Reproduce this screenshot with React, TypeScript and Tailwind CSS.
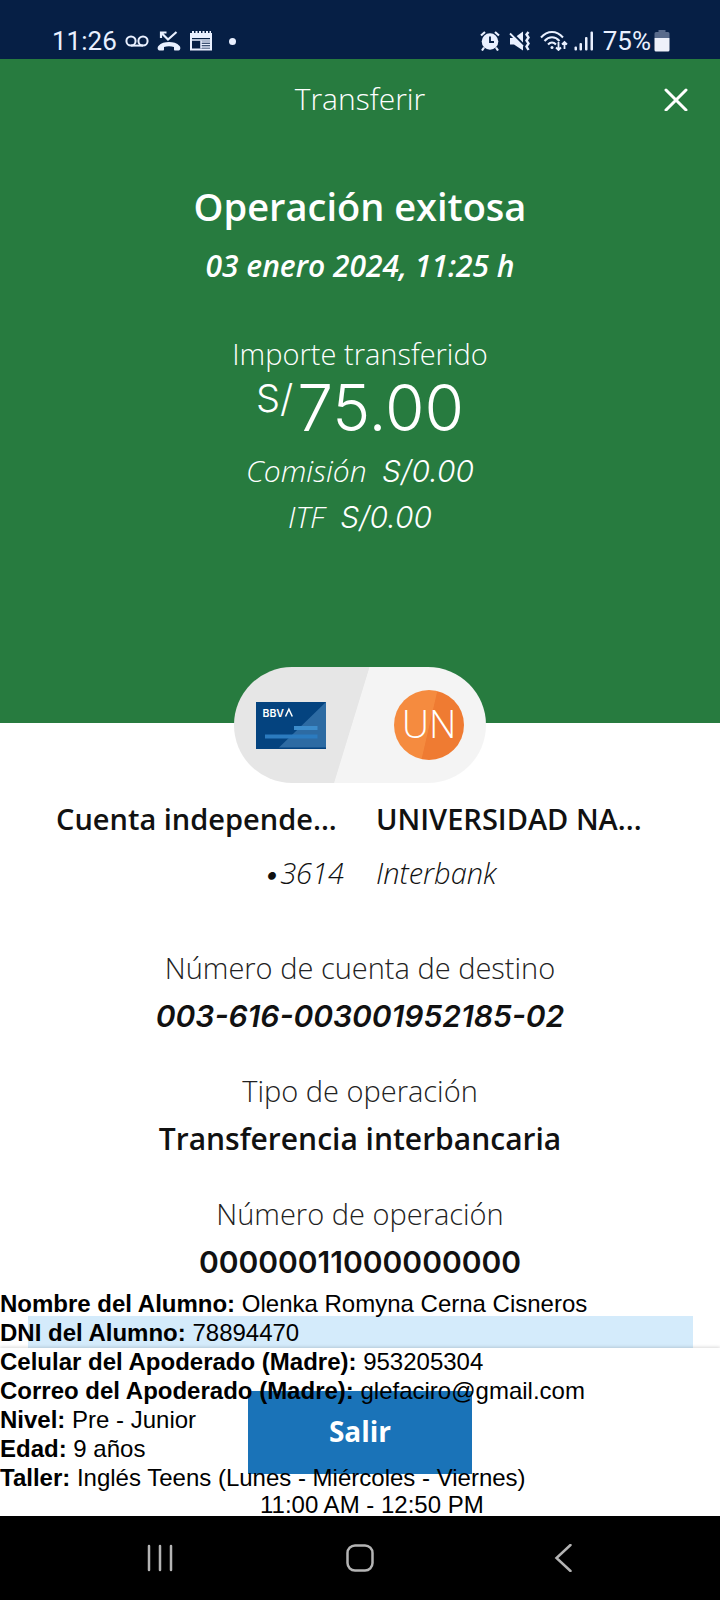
import type { ReactNode } from "react";

interface DetailProps {
  label: string;
  children: ReactNode;
  valueClass?: string;
}

const studentInfo = [
  { label: "Nombre del Alumno:", value: "Olenka Romyna Cerna Cisneros" },
  { label: "DNI del Alumno:", value: "78894470" },
  { label: "Celular del Apoderado (Madre):", value: "953205304" },
  { label: "Correo del Apoderado (Madre):", value: "glefaciro@gmail.com" },
  { label: "Nivel:", value: "Pre - Junior" },
  { label: "Edad:", value: "9 años" },
  { label: "Taller:", value: "Inglés Teens (Lunes - Miércoles - Viernes)" },
];

function VoicemailIcon() {
  return (
    <svg width="24" height="20" viewBox="0 0 24 20" fill="none" stroke="currentColor" strokeWidth="2">
      <circle cx="6" cy="10" r="4.6" />
      <circle cx="18" cy="10" r="4.6" />
      <path d="M6 14.6h12" />
    </svg>
  );
}

function MissedCallIcon() {
  return (
    <svg width="24" height="20" viewBox="0 0 24 20" fill="none">
      <path d="M4 7V1.5h5.5M4.5 2l6.500 6.500L19.500 1" stroke="currentColor" strokeWidth="2.200" />
      <path
        d="M1 18.5c-.6-1-.4-2.6.4-3.6C4 12 8 11 12 11s8 1 10.600 3.900c.8 1 1 2.600.4 3.600-.3.700-.8 1-1.500 1h-3.500c-.6 0-1-.4-1-1v-2.500c-3-1.100-7-1.100-10 0v2.500c0 .6-.4 1-1 1H2.500c-.7 0-1.200-.3-1.500-1z"
        fill="currentColor"
      />
    </svg>
  );
}

function CalendarNewsIcon() {
  return (
    <svg width="24" height="20" viewBox="0 0 24 20" fill="none" stroke="currentColor">
      <path d="M2 3h20v15.500H2z" strokeWidth="2" />
      <path d="M2 5h20" strokeWidth="4" />
      <path d="M2 9h20" strokeWidth="1.500" />
      <path d="M3 1.500h19" strokeWidth="3" strokeDasharray="2 1.500" />
      <path d="M12 9.500v8M12 11h9M12 13.500h9M12 16h9" strokeWidth="1.500" />
    </svg>
  );
}

function AlarmIcon() {
  return (
    <svg width="20" height="20" viewBox="0 0 20 20" fill="none">
      <path d="M1 4.500 5 1M19 4.500 15 1M4 16.500 2 19.500M16 16.500l2 3" stroke="currentColor" strokeWidth="2.200" />
      <circle cx="10" cy="10.500" r="8.300" fill="currentColor" />
      <path d="M10 5.500v5.500h4" stroke="#061f45" strokeWidth="1.800" />
    </svg>
  );
}

function MutedIcon() {
  return (
    <svg width="22" height="20" viewBox="0 0 22 20" fill="none">
      <path d="M1 7h4l9-6.500v19L5 13.500H1z" fill="currentColor" />
      <path d="M1 0 17 16" stroke="#061f45" strokeWidth="2.200" />
      <path d="M1 2.500 14 15.500" stroke="currentColor" strokeWidth="1.800" />
      <path d="M19.500 1 17.500 3.500l2 3-2 3 2 3-2 3 2 3.500" stroke="currentColor" strokeWidth="2.400" />
    </svg>
  );
}

function WifiIcon() {
  return (
    <svg width="28" height="20" viewBox="0 0 28 20" fill="none" stroke="currentColor">
      <path d="M1 6.500C7.500-.8 16.500-.8 23 6.500M4.500 10c4.500-5 10.500-5 15 0M8 13.500c2.500-2.800 5.500-2.800 8 0" strokeWidth="2" />
      <circle cx="12" cy="16.500" r="1.500" fill="currentColor" stroke="none" />
      <path d="M18.500 11v8M16 16.500l2.500 2.500 2.500-2.500M24.500 18v-7.500M22 13.500l2.500-2.500 2.500 2.500" strokeWidth="1.800" />
    </svg>
  );
}

function SignalIcon() {
  return (
    <svg width="20" height="20" viewBox="0 0 20 20" fill="currentColor">
      <rect x="0.500" y="15.500" width="2.500" height="4" rx="1" />
      <rect x="5.500" y="12" width="2.500" height="7.500" rx="1" />
      <rect x="11" y="6" width="2.500" height="13.500" rx="1" />
      <rect x="16.500" y="0.500" width="2.500" height="19" rx="1" />
    </svg>
  );
}

function BatteryIcon() {
  return (
    <svg width="16" height="22" viewBox="0 0 16 22">
      <path d="M4.500 0h7v2H14a1.500 1.500 0 0 1 1.500 1.500V8H.5V3.500A1.500 1.500 0 0 1 2 2h2.500z" fill="#596b8b" />
      <path d="M.5 8h15v12a1.500 1.500 0 0 1-1.500 1.500H2A1.500 1.500 0 0 1 .5 20z" fill="#eef1fa" />
    </svg>
  );
}

function StatusBar() {
  return (
    <div className="flex h-[59px] items-end justify-between bg-[#061f45] pr-[50px] pb-[2px] pl-[52px] font-['Roboto',sans-serif] text-[26px] leading-8 text-[#e9f0ff]">
      <div className="flex items-center gap-2">
        <span>11:26</span>
        <VoicemailIcon />
        <MissedCallIcon />
        <CalendarNewsIcon />
        <span className="ml-2 size-[7px] rounded-full bg-[#e9f0ff]" />
      </div>
      <div className="flex items-center gap-[9px]">
        <AlarmIcon />
        <MutedIcon />
        <div className="flex items-center gap-[6px]">
          <WifiIcon />
          <SignalIcon />
        </div>
        <div className="flex items-center gap-[3px]">
          <span>75%</span>
          <BatteryIcon />
        </div>
      </div>
    </div>
  );
}

function AccountCard() {
  return (
    <svg width="70" height="47" viewBox="0 0 70 47" role="img" aria-label="BBVA">
      <rect width="70" height="47" fill="#04437f" />
      <path d="M70 0v45.500H23z" fill="#2d6ba3" />
      <rect x="38" y="24" width="23.500" height="4" fill="#3c8ccb" />
      <rect x="9" y="32.500" width="52.500" height="4" fill="#2b7bbf" />
      <text x="6.500" y="14.500" fill="#fff" fontSize="10.500" fontWeight="600" fontFamily="Inter, sans-serif">
        BBV
      </text>
      <path d="m29.500 14.500 3.400-7.200 3.400 7.200" fill="none" stroke="#fff" strokeWidth="1.500" />
    </svg>
  );
}

function Detail({ label, children, valueClass }: DetailProps) {
  return (
    <div>
      <dt className="text-[29px] font-[350] text-[#222]">{label}</dt>
      <dd className={valueClass ?? "font-semibold"}>{children}</dd>
    </div>
  );
}

function StudentNote() {
  return (
    <div className="pointer-events-none absolute inset-x-0 top-0 font-['Liberation_Sans',Arial,sans-serif] text-[24px] leading-[29px] whitespace-nowrap text-black">
      {studentInfo.map((item) => (
        <p key={item.label}>
          <b>{item.label}</b> {item.value}
        </p>
      ))}
      <p className="pl-[260px] leading-[26px]">11:00 AM - 12:50 PM</p>
    </div>
  );
}

function NavBar() {
  return (
    <nav className="grid h-[84px] grid-cols-3 bg-black px-[60px] text-[#b4b4b4]">
      <button type="button" aria-label="Recientes" className="flex items-center justify-center">
        <svg width="28" height="28" viewBox="0 0 28 28" stroke="currentColor" strokeWidth="2.500" strokeLinecap="round">
          <path d="M3 2v24M14 2v24M25 2v24" />
        </svg>
      </button>
      <button type="button" aria-label="Inicio" className="flex items-center justify-center">
        <svg width="28" height="28" viewBox="0 0 28 28" fill="none" stroke="currentColor" strokeWidth="2.500">
          <rect x="1.500" y="1.500" width="25" height="25" rx="7.500" />
        </svg>
      </button>
      <button type="button" aria-label="Atrás" className="flex items-center justify-center">
        <svg width="28" height="28" viewBox="0 0 28 28" fill="none" stroke="currentColor" strokeWidth="2.500" strokeLinecap="round">
          <path d="M24.500 1 10.500 14l14 13" />
        </svg>
      </button>
    </nav>
  );
}

export default function App() {
  return (
    <div className="flex min-h-screen flex-col bg-white font-['Open_Sans','Noto_Sans',sans-serif] text-[30px] leading-10 text-[#111]">
      <StatusBar />

      <section className="bg-[#277b3f] pb-[183px] text-center text-white">
        <header className="grid grid-cols-[48px_1fr_48px] items-center px-5 pt-4">
          <h1 className="col-start-2 text-[30px] leading-[48px] font-[350]">Transferir</h1>
          <button type="button" aria-label="Cerrar" className="flex size-12 items-center justify-center">
            <svg width="24" height="24" viewBox="0 0 24 24" stroke="currentColor" strokeWidth="3" strokeLinecap="round">
              <path d="m2 3 20 20M22 3 2 23" />
            </svg>
          </button>
        </header>
        <h2 className="mt-[59px] text-[38px] leading-[48px] font-semibold">Operación exitosa</h2>
        <p className="mt-4 font-semibold italic">03 enero 2024, 11:25 h</p>
        <p className="mt-12 text-[29px] font-[350]">Importe transferido</p>
        <p className="flex items-start justify-center font-['Inter',sans-serif] text-[64px] leading-[68px] font-light">
          <span className="pr-1 text-[38px] leading-[48px]">S/</span>75.00
        </p>
        <div className="mt-[6px] leading-[46px] font-[350] italic">
          <p>
            Comisión&nbsp; <span className="font-['Inter',sans-serif] font-light">S/0.00</span>
          </p>
          <p>
            ITF&nbsp; <span className="font-['Inter',sans-serif] font-light">S/0.00</span>
          </p>
        </div>
      </section>

      <main className="flex-1">
        <div className="mx-auto -mt-14 flex h-[116px] w-[252px] items-center justify-between rounded-full bg-[linear-gradient(107deg,#e6e6e6_47%,#f4f4f4_47.3%)] px-[22px]">
          <AccountCard />
          <span className="flex size-[70px] items-center justify-center rounded-full bg-[linear-gradient(103deg,#f58b3f_50%,#ef7b32_51%)] pb-1 text-[38px] font-[350] text-white">
            UN
          </span>
        </div>

        <div className="mt-4 grid grid-cols-2 gap-8 px-14 text-[29px]">
          <div>
            <p className="font-semibold whitespace-nowrap">Cuenta independe...</p>
            <p className="mt-[14px] text-right font-[350] italic">
              <span className="font-['Inter',sans-serif]">•</span>3614
            </p>
          </div>
          <div>
            <p className="font-semibold whitespace-nowrap">UNIVERSIDAD NA...</p>
            <p className="mt-[14px] font-[350] italic">Interbank</p>
          </div>
        </div>

        <dl className="mt-[50px] flex flex-col gap-[27px] text-center leading-[48px]">
          <Detail
            label="Número de cuenta de destino"
            valueClass="font-['Inter',sans-serif] font-semibold italic"
          >
            003-616-003001952185-02
          </Detail>
          <Detail label="Tipo de operación">Transferencia interbancaria</Detail>
          <Detail label="Número de operación" valueClass="font-['Inter',sans-serif] font-semibold">
            00000011000000000
          </Detail>
        </dl>
      </main>

      <div className="relative pt-[27px]">
        <div className="mr-[27px] ml-7 h-8 bg-[#d4ebfb]" />
        <footer className="flex h-[168px] items-start justify-center bg-white pt-[43px] shadow-[0_-1px_3px_rgba(0,0,0,0.15)]">
          <button type="button" className="h-[83px] w-[224px] bg-[#1a73b8] pb-1 text-[28px] font-bold text-white">
            Salir
          </button>
        </footer>
        <StudentNote />
      </div>

      <NavBar />
    </div>
  );
}
